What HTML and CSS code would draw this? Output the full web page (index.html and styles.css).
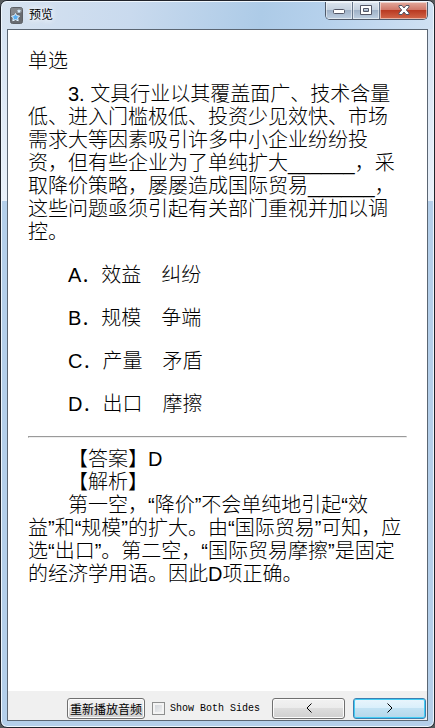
FILE: index.html
```html
<!DOCTYPE html>
<html lang="zh-CN">
<head>
    <meta charset="UTF-8">
    <meta name="viewport" content="width=device-width, initial-scale=1.0">
    <title>预览</title>
    <link rel="stylesheet" href="styles.css">
</head>
<body>
    <div class="window">
        <header class="titlebar">
            <svg class="app-icon" width="13" height="17" viewBox="0 0 13 17">
                <rect x="0.5" y="0.5" width="12" height="16" rx="2" fill="#686b70" stroke="#5d6066"/>
                <path d="M1 8L12 5V2Q12 1 11 1H2Q1 1 1 2Z" fill="#85888d"/>
                <path d="M5.500 6.500l1.300 2.200 2.700.3-1.800 2 .5 2.800-2.700-1.200-2.700 1.200.5-2.800-1.800-2 2.700-.3z" fill="#58aef2" stroke="#e8f5ff"/>
                <path d="M9 2l.6 1.300 1.600.2-1.100 1 .2 1.500L9 5.300 7.700 6l.2-1.500-1.100-1 1.600-.2z" fill="#d7edff"/>
            </svg>
            <h1 class="title">预览</h1>
            <div class="window-buttons">
                <button class="win-btn" aria-label="Minimize">
                    <svg width="12" height="12" viewBox="0 0 12 12">
                        <rect x="0.5" y="5.5" width="11" height="4" rx="1" fill="#fff" stroke="#535666"/>
                    </svg>
                </button>
                <button class="win-btn" aria-label="Maximize">
                    <svg width="12" height="12" viewBox="0 0 12 12">
                        <path d="M0.500 1.500h11v9h-11zM3.500 4.500v3h5v-3z" fill="#fff" fill-rule="evenodd" stroke="#535666"/>
                    </svg>
                </button>
                <button class="win-btn close" aria-label="Close">
                    <svg width="12" height="12" viewBox="0 0 12 12">
                        <path d="M1 1.500h3L6 4l2-2.500h3V3L8.300 6 11 9v1.500H8L6 8l-2 2.500H1V9l2.700-3L1 3z" fill="#fff" stroke="#535666"/>
                    </svg>
                </button>
            </div>
        </header>

        <div class="client">
            <main class="card">
                <p class="kind">单选</p>
                <p class="indent">3. 文具行业以其覆盖面广、技术含量低、进入门槛极低、投资少见效快、市场需求大等因素吸引许多中小企业纷纷投资，但有些企业为了单纯扩大______，采取降价策略，屡屡造成国际贸易______，这些问题亟须引起有关部门重视并加以调控。</p>
                <p class="option">A．效益　纠纷</p>
                <p class="option">B．规模　争端</p>
                <p class="option">C．产量　矛盾</p>
                <p class="option">D．出口　摩擦</p>
                <hr>
                <p class="indent">【答案】D</p>
                <p class="indent">【解析】</p>
                <p class="indent">第一空，“降价”不会单纯地引起“效益”&#8288;和“规模”的扩大。由“国际贸易”可知，应选“出口”。第二空，“国际贸易摩擦”是固定的经济学用语。因此D项正确。</p>
            </main>

            <footer class="toolbar">
                <button class="button replay">重新播放音频</button>
                <label class="both-sides"><input type="checkbox">Show Both Sides</label>
                <button class="button nav" aria-label="Previous">
                    <svg width="8" height="10" viewBox="0 0 8 10"><path d="M6.500.5L2 5l4.500 4.500"/></svg>
                </button>
                <button class="button nav next" aria-label="Next">
                    <svg width="8" height="10" viewBox="0 0 8 10"><path d="M1.500.5L6 5 1.500 9.500"/></svg>
                </button>
            </footer>
        </div>
    </div>
</body>
</html>
```

FILE: styles.css
```css
* {
    box-sizing: border-box;
}
body {
    margin: 0;
    background: #55595c;
    color: #000;
    font-family: "Liberation Sans", "Noto Sans CJK SC", sans-serif;
}
h1, p {
    margin: 0;
}

/* window frame */
.window {
    display: flex;
    flex-direction: column;
    min-height: 100vh;
    padding: 0 6px 6px;
    border: 1px solid #20232b;
    border-radius: 7px;
    background:
        linear-gradient(#d3e1f1, #e9f1fa 200px, transparent 200px),
        #b4cfea;
    box-shadow: inset 0 0 0 1px #eef6fd;
}
.titlebar {
    display: flex;
    align-items: flex-start;
    height: 28px;
    margin: 0 -5px;
    padding: 0 5px 0 8px;
    border-top: 1px solid #eef6fd;
    border-radius: 6px 6px 0 0;
    background: linear-gradient(100deg, #d6e2f0, #c9daee 30%, #adcbe7 60%, #b6d1ec 75%, #d0e1f3);
}
.app-icon {
    margin-top: 5px;
}
.title {
    flex: 1;
    margin-left: 6px;
    font-size: 12px;
    font-weight: 400;
    line-height: 27px;
    text-shadow: 0 0 6px #fff, 0 0 6px #fff;
}
.window-buttons {
    display: flex;
    border: 1px solid #4f5a6b;
    border-top: 0;
    border-radius: 0 0 5px 5px;
    overflow: hidden;
}
.win-btn {
    display: flex;
    align-items: center;
    justify-content: center;
    width: 27px;
    height: 17px;
    padding: 0 0 1px;
    border: 0;
    border-right: 1px solid #66758a;
    background: linear-gradient(#dbe4ee, #c4d0de 48%, #9fb1c7 50%, #bfd0e2);
    box-shadow: inset 0 0 0 1px rgba(255, 255, 255, 0.5);
}
.win-btn.close {
    width: 47px;
    border-right: 0;
    background: linear-gradient(#e2a99d, #cf7566 48%, #b93a22 50%, #d2674a);
}

/* client area */
.client {
    flex: 1;
    display: flex;
    flex-direction: column;
    border: 1px solid #5b6673;
    background: #fff;
}
.card {
    flex: 1;
    padding: 20px;
    font-size: 20px;
    font-weight: 300;
    line-height: 23px;
}
.kind {
    margin-bottom: 10px;
}
.indent,
.option {
    text-indent: 40px;
}
.option {
    margin-top: 20px;
}
.card hr {
    margin: 20px 0 10px;
    border: 1px solid;
    border-color: #9a9a9a #eee #eee #9a9a9a;
}

/* bottom bar */
.toolbar {
    display: flex;
    align-items: center;
    justify-content: flex-end;
    height: 29px;
    padding: 5px 1px 0 0;
    background: #f0f0f0;
}
.button {
    display: flex;
    align-items: center;
    justify-content: center;
    height: 21px;
    margin: 0;
    padding: 0;
    border: 1px solid #707070;
    border-radius: 3px;
    background: linear-gradient(#f2f2f2, #ebebeb 48%, #dddddd 50%, #cfcfcf);
    box-shadow: inset 0 0 0 1px #fcfcfc;
    color: #000;
    font-family: "Noto Sans CJK SC", sans-serif;
    font-size: 12px;
}
.replay {
    width: 78px;
}
.both-sides {
    display: flex;
    align-items: center;
    margin: 0 12px 0 7px;
    font-family: "Liberation Mono", monospace;
    font-size: 10px;
    white-space: nowrap;
}
.both-sides input {
    appearance: none;
    width: 13px;
    height: 13px;
    margin: 0 5px 0 0;
    border: 1px solid #8e8f8f;
    background: linear-gradient(135deg, #cbcfd5, #f6f6f6);
    box-shadow: inset 0 0 0 2px #f4f4f4;
}
.nav {
    width: 73px;
}
.nav svg {
    fill: none;
    stroke: #000;
}
.next {
    margin-left: 8px;
    border-color: #3c7fb1;
    background: linear-gradient(#e9f5fc, #d9effb 48%, #c2e2f3 50%, #b4d7ea);
    box-shadow: inset 0 0 0 1px #42cdf5;
}
```
